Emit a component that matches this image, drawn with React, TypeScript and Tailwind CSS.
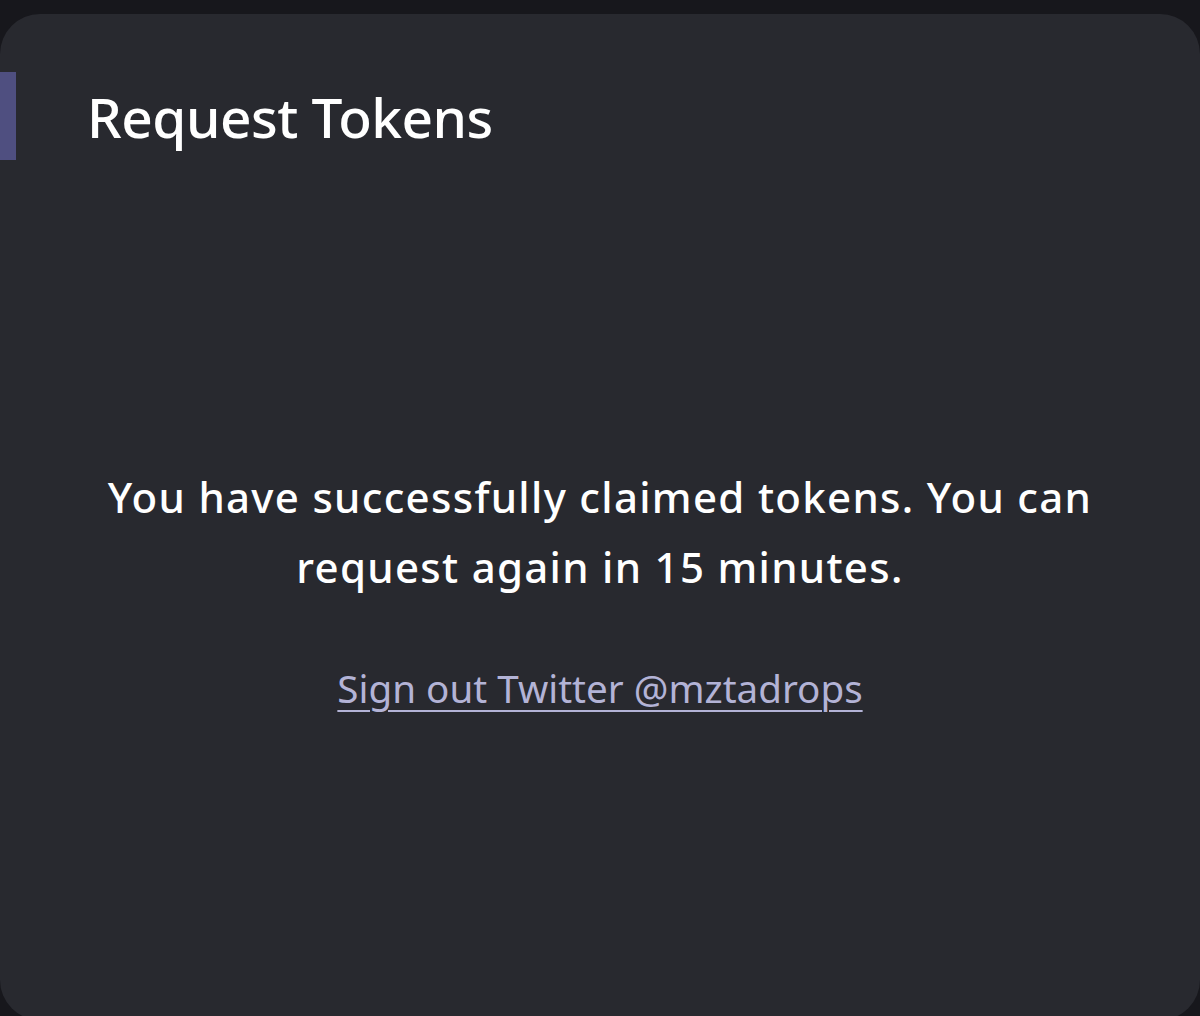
import React from "react";

export default function App() {
  return (
    <div
      className="w-[1200px] h-[1016px] overflow-hidden bg-[#17171c] pt-[14px]"
      style={{ fontFamily: '"Noto Sans", "Open Sans", sans-serif' }}
    >
      <div className="h-[1006px] bg-[#28292f] rounded-[40px] pt-[58px] flex flex-col">
        <div className="flex items-center h-[88px]">
          <div className="w-[16px] h-[88px] bg-[#4f4f80]" />
          <h1 className="ml-[71px] text-[55px] font-medium text-white leading-none tracking-[-0.5px]">
            Request Tokens
          </h1>
        </div>
        <div className="mt-[302px] flex flex-col items-center text-center">
          <p className="text-[42px] font-medium text-white leading-[70px] tracking-[1.3px]">
            You have successfully claimed tokens. You can
            <br />
            request again in 15 minutes.
          </p>
          <a
            href="#"
            className="mt-[67px] text-[38.6px] text-[#b3b3d6] underline underline-offset-[7px] decoration-2 leading-none"
          >
            Sign out Twitter @mztadrops
          </a>
        </div>
      </div>
    </div>
  );
}
